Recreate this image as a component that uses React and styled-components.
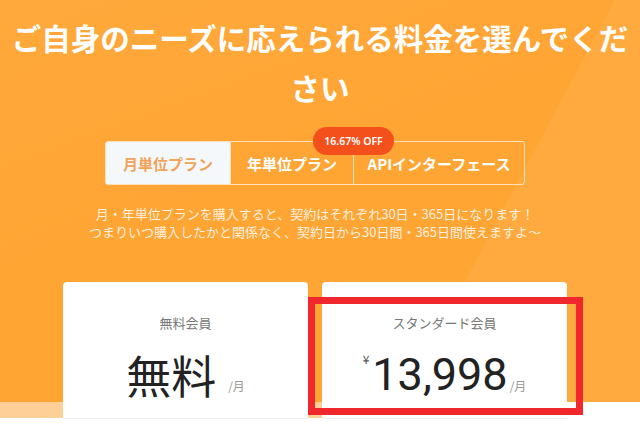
import React from "react";
import styled, { createGlobalStyle } from "styled-components";

const GlobalStyle = createGlobalStyle`
  body {
    margin: 0;
    background: #fff;
    font-family: "Noto Sans CJK JP", "Noto Sans", sans-serif;
  }
`;

const StyledPricingPage = styled.div`
  height: 437px;
  overflow: hidden;
  background:
    linear-gradient(118deg, rgba(255, 255, 255, 0) 72%, rgba(255, 255, 255, 0.05) 72%) 0 0 / 100% 402px no-repeat,
    linear-gradient(160deg, rgba(255, 255, 255, 0.04) 0%, rgba(255, 255, 255, 0) 45%) 0 0 / 100% 402px no-repeat,
    linear-gradient(#ffcf98, #ffcf98) 0 402px / 567px 16px no-repeat,
    linear-gradient(#ffa534, #ffa534) 0 0 / 100% 402px no-repeat,
    #ffffff;
  padding-top: 12px;
  box-sizing: border-box;
`;

const Title = styled.h1`
  margin: 0;
  padding: 0 6px;
  text-align: center;
  color: #fff;
  font-size: 29.5px;
  font-weight: 700;
  line-height: 50px;
`;

const Content = styled.div`
  padding-right: 10px;
  display: flex;
  flex-direction: column;
  align-items: center;
`;

const TabBar = styled.div`
  margin-top: 29px;
  display: grid;
  grid-template-columns: 124px 123px 171px;
  height: 44px;
  border: 1px solid rgba(255, 255, 255, 0.65);
  border-radius: 3px;
  box-sizing: border-box;
`;

const Tab = styled.div`
  position: relative;
  display: flex;
  align-items: center;
  justify-content: center;
  font-size: 15px;
  font-weight: 700;
  color: ${(p) => (p.active ? "#f1a35a" : "#fff")};
  background: ${(p) => (p.active ? "#f5f8fb" : "transparent")};
  border-left: ${(p) => (p.first ? "none" : "1px solid rgba(255, 255, 255, 0.65)")};
`;

const Badge = styled.span`
  position: absolute;
  top: -15px;
  left: -41px;
  width: 81px;
  height: 28px;
  border-radius: 14px;
  background: #f3501c;
  color: #fff;
  font-family: "Noto Sans", sans-serif;
  font-size: 10.5px;
  font-weight: 600;
  display: flex;
  align-items: center;
  justify-content: center;
`;

const Notes = styled.p`
  margin: 20px 0 0;
  text-align: center;
  color: rgba(255, 255, 255, 0.85);
  font-size: 13px;
  line-height: 18px;
`;

const Cards = styled.div`
  margin-top: 41px;
  display: grid;
  grid-template-columns: 245px 245px;
  gap: 14px;
`;

const Card = styled.div`
  position: relative;
  background: #fff;
  border-radius: 4px;
  padding-top: 31px;
  height: 200px;
  box-sizing: border-box;
`;

const CardTitle = styled.div`
  text-align: center;
  font-size: 13px;
  line-height: 20px;
  color: #777;
`;

const PriceRow = styled.div`
  margin-top: 16px;
  height: 52px;
  display: flex;
  align-items: flex-end;
  justify-content: center;
  padding-bottom: 17px;
  border-bottom: 1px solid #eeeeee;
`;

const Yen = styled.span`
  align-self: flex-start;
  margin-top: 1px;
  margin-right: 3px;
  font-size: 12px;
  color: #555;
`;

const Amount = styled.span`
  font-family: ${(p) => (p.numeric ? "Roboto, 'Liberation Sans', sans-serif" : "inherit")};
  font-size: 45px;
  font-weight: 400;
  line-height: 52px;
  color: #222;
`;

const PerMonth = styled.span`
  margin-left: ${(p) => (p.wide ? "12px" : "2px")};
  margin-bottom: 7px;
  font-size: 12px;
  color: #999;
`;

const Highlight = styled.div`
  position: absolute;
  left: -14px;
  top: 15px;
  width: 275px;
  height: 118px;
  border: 7px solid #f0282d;
  box-sizing: border-box;
  pointer-events: none;
`;

const plans = [
  { name: "無料会員", amount: "無料" },
  { name: "スタンダード会員", amount: "13,998", yen: true, highlight: true },
];

const App = () => {
  return (
    <>
      <GlobalStyle />
      <StyledPricingPage>
        <Title>
          ご自身のニーズに応えられる料金を選んでくだ
          <br />
          さい
        </Title>
        <Content>
          <TabBar>
            <Tab first active>
              月単位プラン
            </Tab>
            <Tab>年単位プラン</Tab>
            <Tab>
              <Badge>16.67% OFF</Badge>
              APIインターフェース
            </Tab>
          </TabBar>
          <Notes>
            月・年単位プランを購入すると、契約はそれぞれ30日・365日になります！
            <br />
            つまりいつ購入したかと関係なく、契約日から30日間・365日間使えますよ〜
          </Notes>
          <Cards>
            {plans.map((plan) => (
              <Card key={plan.name}>
                <CardTitle>{plan.name}</CardTitle>
                <PriceRow>
                  {plan.yen && <Yen>¥</Yen>}
                  <Amount numeric={plan.yen}>{plan.amount}</Amount>
                  <PerMonth wide={!plan.yen}>/月</PerMonth>
                </PriceRow>
                {plan.highlight && <Highlight />}
              </Card>
            ))}
          </Cards>
        </Content>
      </StyledPricingPage>
    </>
  );
};

export default App;
